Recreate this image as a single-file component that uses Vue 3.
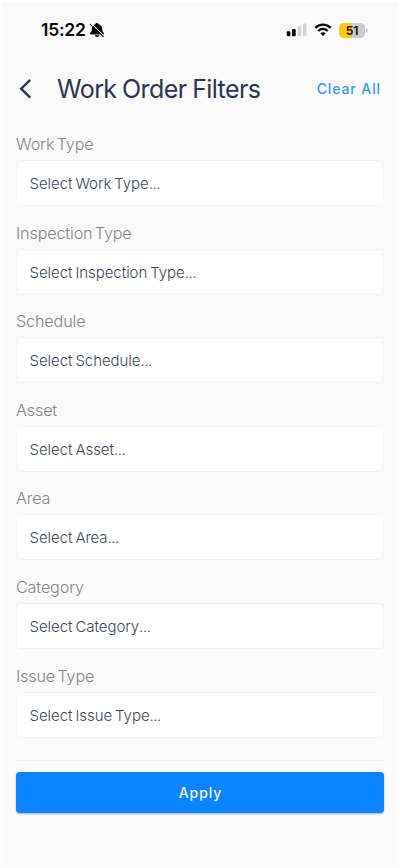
<script setup>
const filters = [
  { label: 'Work Type', key: 'work' },
  { label: 'Inspection Type', key: 'inspection' },
  { label: 'Schedule', key: 'schedule' },
  { label: 'Asset', key: 'asset' },
  { label: 'Area', key: 'area' },
  { label: 'Category', key: 'category' },
  { label: 'Issue Type', key: 'issue' },
]
</script>

<template>
  <main class="screen">
    <div class="status">
      <span class="time">15:22</span>
      <svg class="bell" width="16" height="16" viewBox="0 0 16 16">
        <path d="M8 .9c.9 0 1.500.6 1.700 1.400 2.300.7 3.500 2.400 3.500 4.500 0 2.300.5 3.300 1.600 4.300.6.600.4 1.400-.5 1.400H1.700c-.9 0-1.100-.8-.5-1.400 1.100-1 1.600-2 1.600-4.300 0-2.100 1.200-3.800 3.500-4.500C6.500 1.500 7.100.9 8 .9z" fill="#080808" />
        <path d="M5.700 13.200h4.600c-.2 1-1.100 1.700-2.300 1.700s-2.100-.7-2.300-1.700z" fill="#080808" />
        <path d="M2.200 1.700l12.500 12" stroke="#fafafa" stroke-width="1.100" />
        <path d="M1.300 2.300l13 12.200" stroke="#111" stroke-width="1.100" stroke-linecap="round" />
      </svg>
      <svg class="signal" width="22" height="14" viewBox="0 0 22 14">
        <rect x=".7" y="8.300" width="3.700" height="4.900" rx="1" fill="#080808" />
        <rect x="6" y="6" width="3.700" height="7.200" rx="1" fill="#080808" />
        <rect x="11.700" y="3.300" width="3.500" height="9.900" rx="1" fill="#d2d2d2" />
        <rect x="17" y=".6" width="3.500" height="12.600" rx="1" fill="#d2d2d2" />
      </svg>
      <svg class="wifi" width="18" height="14" viewBox="0 0 18 14">
        <path d="M1.300 4.900C5.500.6 12.500.6 16.700 4.900" fill="none" stroke="#080808" stroke-width="2.300" />
        <path d="M4.200 8C6.900 5.200 11.100 5.200 13.800 8" fill="none" stroke="#080808" stroke-width="2.200" />
        <path d="M6.300 10.300c1.500-1.500 3.900-1.500 5.400 0L9 13z" fill="#080808" />
      </svg>
      <span class="battery"><b>51</b></span>
      <svg class="tip" width="2" height="5" viewBox="0 0 2 5"><path d="M0 0q1.800.8 1.800 2.500T0 5z" fill="#ccc" /></svg>
    </div>

    <header class="header">
      <svg class="back" width="14" height="22" viewBox="0 0 14 22">
        <path d="M12.200 1.800L3.200 10.700l9 8.900" fill="none" stroke="#2b3450" stroke-width="2.400" />
      </svg>
      <h1>Work Order Filters</h1>
      <a class="clear">Clear All</a>
    </header>

    <section class="fields">
      <div v-for="filter in filters" :key="filter.key" class="field">
        <label>{{ filter.label }}</label>
        <div class="select">Select {{ filter.label }}<span class="dots">...</span></div>
      </div>
    </section>

    <footer class="footer">
      <button class="apply">Apply</button>
    </footer>
  </main>
</template>

<style>
body { background: #fff; }
</style>

<style scoped>
.screen {
  box-sizing: border-box;
  width: 400px;
  height: 868px;
  border: 2px solid #fefefe;
  background: #fafafa;
  padding: 0 14px;
  font-family: Inter, sans-serif;
  overflow: hidden;
}
.status {
  display: flex;
  align-items: center;
  height: 32px;
  padding: 12px 16px 0 25px;
}
.time {
  font-size: 17.5px;
  font-weight: 600;
  letter-spacing: -.25px;
  line-height: 20px;
  width: 48px;
  color: #080808;
  white-space: nowrap;
}
.signal { margin-left: auto; }
.wifi { margin-left: 6px; }
.battery {
  display: flex;
  align-items: center;
  justify-content: center;
  width: 26px;
  height: 15px;
  margin-left: 7px;
  border-radius: 4.5px;
  background: linear-gradient(90deg, #fccb12 51%, #ccc 51%);
  color: #1a1a12;
  font-size: 12px;
}
.battery b { font-weight: 700; letter-spacing: -.2px; }
.tip { margin-left: 1px; }
.header {
  display: flex;
  align-items: center;
  height: 34px;
  margin-top: 26px;
  padding: 0 4px 0 2px;
}
h1 {
  margin: 0 0 0 25px;
  font-size: 25px;
  font-weight: 380;
  line-height: 34px;
  letter-spacing: -.6px;
  word-spacing: -.8px;
  color: #2b3450;
  white-space: nowrap;
}
.clear {
  margin: 0 -1px 2px auto;
  font-size: 14px;
  font-weight: 500;
  letter-spacing: .9px;
  color: #3695ee;
  white-space: nowrap;
}
.fields {
  display: flex;
  flex-direction: column;
  gap: 15.6px;
  padding-top: 27px;
}
.field { display: flex; flex-direction: column; gap: 5px; }
label {
  height: 22px;
  line-height: 22px;
  font-size: 16.2px;
  font-weight: 300;
  letter-spacing: -.16px;
  word-spacing: -2px;
  color: #858585;
}
.select {
  box-sizing: border-box;
  height: 46px;
  padding: 0 12.5px;
  border: 1px solid #f0f0f0;
  border-radius: 5px;
  background: #fff;
  font-size: 15px;
  font-weight: 350;
  line-height: 45px;
  letter-spacing: -.05px;
  word-spacing: -1.2px;
  color: #3d465e;
}
.dots { letter-spacing: -.45px; }
.footer {
  margin-top: 22px;
  padding-top: 11px;
  border-top: 1px solid #f0f0f0;
}
.apply {
  display: block;
  width: 100%;
  height: 41px;
  padding: 0 0 0 1px;
  border: 0;
  border-radius: 4px;
  background: #0a84ff;
  box-shadow: 0 1px 2px rgba(30, 80, 140, .45);
  color: #f4f9ff;
  font: 500 14px/41px Inter, sans-serif;
  letter-spacing: .9px;
}
</style>
